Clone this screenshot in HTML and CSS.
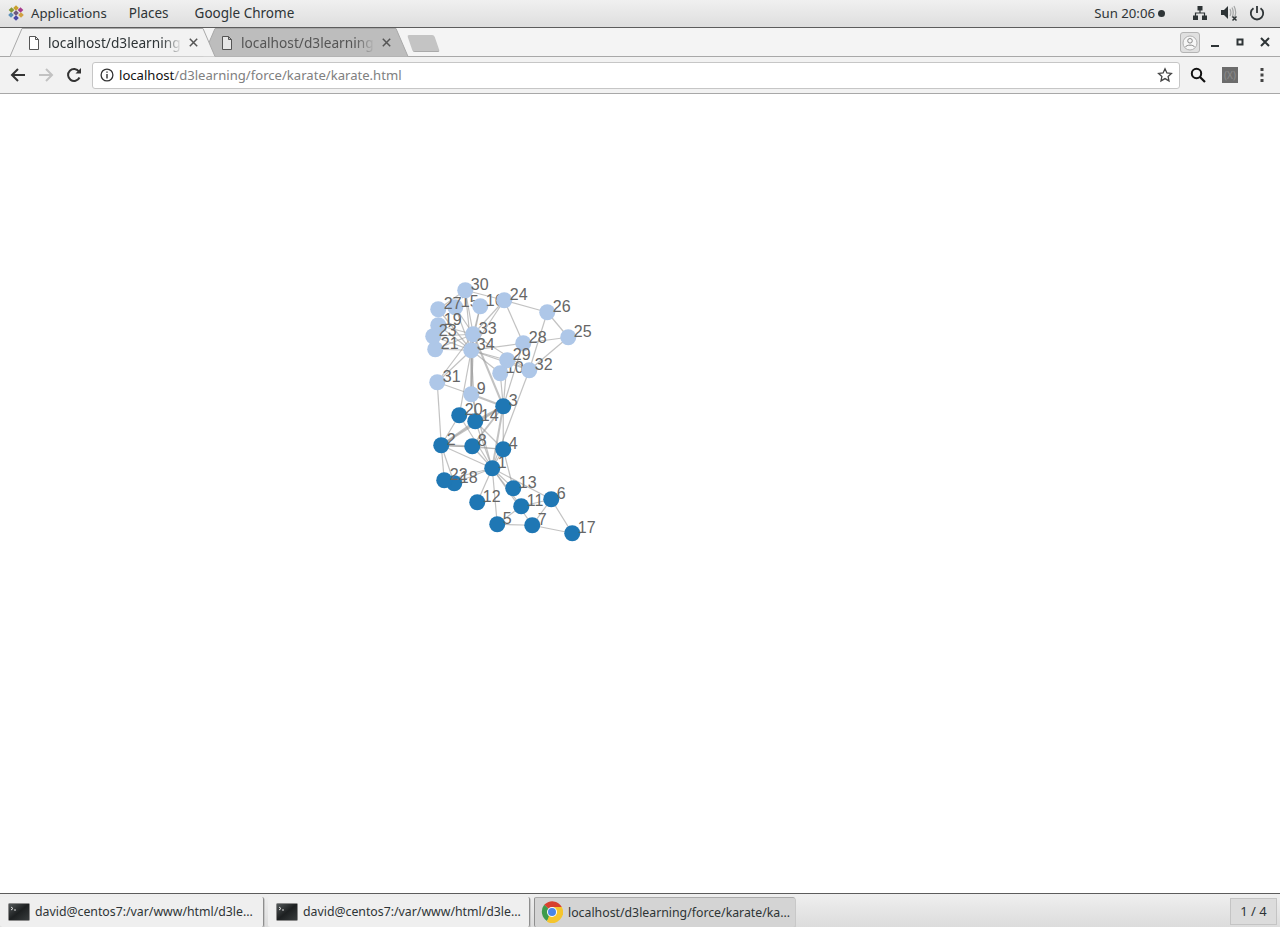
FILE: index.html
```html
<!DOCTYPE html>
<html lang="en">

<head>
    <meta charset="utf-8">
    <link rel="stylesheet" href="styles.css">
    <title>localhost/d3learning/force/karate/karate.html</title>
</head>

<body>
    <header class="top-bar">
        <svg class="apps-icon" width="16" height="16" viewBox="0 0 16 16">
            <rect x="6" y="1" width="4" height="4" fill="#c9a02c" transform="rotate(45 8 3)"/>
            <rect x="10.5" y="3" width="4" height="4" fill="#a63a8c" transform="rotate(45 12.5 5)"/>
            <rect x="1.5" y="3" width="4" height="4" fill="#8a9a34" transform="rotate(45 3.500 5)"/>
            <rect x="1" y="8" width="4" height="4" fill="#5a8fb8" transform="rotate(45 3 10)"/>
            <rect x="11" y="8" width="4" height="4" fill="#d0a040" transform="rotate(45 13 10)"/>
            <rect x="6" y="11" width="4" height="4" fill="#4a4aa8" transform="rotate(45 8 13)"/>
            <rect x="6" y="6" width="4" height="4" fill="#6e5a7e" transform="rotate(45 8 8)"/>
        </svg>
        <span class="menu-item menu-first">Applications</span>
        <span class="menu-item">Places</span>
        <span class="menu-item menu-last">Google Chrome</span>
        <span class="clock">Sun 20:06</span>
        <span class="clock-dot"></span>
        <svg class="tray-icon tray-net" width="16" height="16" viewBox="0 0 16 16">
            <path d="M5.500 1h5v4.500h-5zM1 10.500h5V15H1zM10 10.500h5V15h-5z" fill="#2e3436"/>
            <path d="M8 5v3M3.500 11V8h9v3" fill="none" stroke="#2e3436" stroke-width="1.200"/>
        </svg>
        <svg class="tray-icon tray-sound" width="18" height="18" viewBox="0 0 18 18">
            <path d="M1 6h3l4-4v13l-4-4H1z" fill="#2e3436"/>
            <path d="M10 5c1 2 1 5 0 7M12 3.500c1.500 3 1.500 7 0 10M14 2c2 4 2 9 0 12" fill="none" stroke="#a4a6a6" stroke-width="1.200"/>
            <path d="M12.500 12.500l4 4M16.500 12.500l-4 4" stroke="#2e3436" stroke-width="1.500"/>
        </svg>
        <svg class="tray-icon tray-power" width="16" height="16" viewBox="0 0 16 16">
            <path d="M4.500 3.200a6.200 6.200 0 1 0 7 0" fill="none" stroke="#2e3436" stroke-width="1.800"/>
            <path d="M8 1v7" stroke="#2e3436" stroke-width="1.800"/>
        </svg>
    </header>

    <div class="tab-strip">
        <div class="tab tab-active">
            <svg class="tab-shape" width="206" height="29" viewBox="0 0 206 29">
                <path d="M0 28.500L12 .5H193L205 28.500" fill="#f2f2f2" stroke="#a8a8a8"/>
            </svg>
            <svg class="doc-icon" width="12" height="14" viewBox="0 0 12 14">
                <path d="M1.500.5h6l3 3v10h-9zM7.500.5v3h3" fill="#fff" stroke="#555"/>
            </svg>
            <span class="tab-title">localhost/d3learning</span>
            <svg class="tab-close" width="9" height="9" viewBox="0 0 9 9">
                <path d="M.8.8l7.400 7.400M8.200.8L.8 8.200" stroke="#555" stroke-width="1.500"/>
            </svg>
        </div>
        <div class="tab tab-back">
            <svg class="tab-shape" width="206" height="29" viewBox="0 0 206 29">
                <path d="M0 28.500L12 .5H193L205 28.500" fill="#bdbdbd" stroke="#a8a8a8"/>
            </svg>
            <svg class="doc-icon" width="12" height="14" viewBox="0 0 12 14">
                <path d="M1.500.5h6l3 3v10h-9zM7.500.5v3h3" fill="#e6e6e6" stroke="#555"/>
            </svg>
            <span class="tab-title">localhost/d3learning</span>
            <svg class="tab-close" width="9" height="9" viewBox="0 0 9 9">
                <path d="M.8.8l7.400 7.400M8.200.8L.8 8.200" stroke="#555" stroke-width="1.500"/>
            </svg>
        </div>
        <div class="new-tab"></div>
        <div class="profile-btn">
            <svg width="16" height="16" viewBox="0 0 16 16">
                <circle cx="8" cy="8" r="7" fill="#f6f6f6" stroke="#b0b0b0"/>
                <circle cx="8" cy="5.800" r="2.300" fill="none" stroke="#888"/>
                <path d="M3.500 12c1-2.500 8-2.500 9 0" fill="none" stroke="#888"/>
            </svg>
        </div>
        <div class="win-controls">
            <svg width="10" height="10" viewBox="0 0 10 10"><path d="M1 9h8" stroke="#2e3436" stroke-width="2"/></svg>
            <svg width="10" height="10" viewBox="0 0 10 10"><rect x="2.500" y="2.500" width="5" height="5" fill="none" stroke="#2e3436" stroke-width="2"/></svg>
            <svg width="10" height="10" viewBox="0 0 10 10"><path d="M1 1l8 8M9 1l-8 8" stroke="#2e3436" stroke-width="2"/></svg>
        </div>
    </div>

    <nav class="toolbar">
        <svg class="nav-icon" width="16" height="16" viewBox="0 0 16 16">
            <path d="M15 8H2M8 2L2 8l6 6" fill="none" stroke="#333" stroke-width="2"/>
        </svg>
        <svg class="nav-icon" width="16" height="16" viewBox="0 0 16 16">
            <path d="M1 8h13M8 2l6 6-6 6" fill="none" stroke="#c2c2c2" stroke-width="2"/>
        </svg>
        <svg class="nav-icon" width="16" height="16" viewBox="0 0 16 16">
            <path d="M13.500 10.500A6 6 0 1 1 13 4.500" fill="none" stroke="#333" stroke-width="2"/>
            <path d="M9.500 6.500H15V1z" fill="#333"/>
        </svg>
        <div class="url-box">
            <svg class="info-icon" width="14" height="14" viewBox="0 0 14 14">
                <circle cx="7" cy="7" r="5.900" fill="none" stroke="#333" stroke-width="1.300"/>
                <path d="M7 6v4.500M7 3.500v1.300" stroke="#333" stroke-width="1.400"/>
            </svg>
            <span class="url-text"><span class="url-host">localhost</span>/d3learning/force/karate/karate.html</span>
            <svg class="star-icon" width="16" height="16" viewBox="0 0 16 16">
                <path d="M8 1.800l1.900 4.100 4.500.5-3.300 3 .9 4.500L8 11.600l-4 2.300.9-4.500-3.300-3 4.500-.5z" fill="none" stroke="#444" stroke-width="1.300"/>
            </svg>
        </div>
        <svg class="search-icon" width="16" height="16" viewBox="0 0 16 16">
            <circle cx="6.500" cy="6.500" r="4.700" fill="none" stroke="#111" stroke-width="2"/>
            <path d="M10 10l5 5" stroke="#111" stroke-width="2.200"/>
        </svg>
        <span class="ext-icon">(X)</span>
        <svg class="menu-icon" width="4" height="14" viewBox="0 0 4 14">
            <path d="M.5 0h3v3h-3zM.5 5.500h3v3h-3zM.5 11h3v3h-3z" fill="#444"/>
        </svg>
    </nav>

    <main class="page">
        <svg class="graph" width="1280" height="799" viewBox="-0.25 93.75 1280 799">
            <g class="links">
                <line x1="441" y1="445" x2="492" y2="468"/>
                <line x1="503" y1="449" x2="492" y2="468"/>
                <line x1="503" y1="449" x2="441" y2="445"/>
                <line x1="503" y1="449" x2="503" y2="406"/>
                <line x1="497" y1="524" x2="492" y2="468"/>
                <line x1="551" y1="499" x2="492" y2="468"/>
                <line x1="532" y1="525" x2="492" y2="468"/>
                <line x1="532" y1="525" x2="497" y2="524"/>
                <line x1="532" y1="525" x2="551" y2="499"/>
                <line x1="472" y1="446" x2="492" y2="468"/>
                <line x1="472" y1="446" x2="503" y2="449"/>
                <line x1="471" y1="394" x2="492" y2="468"/>
                <line x1="500" y1="373" x2="503" y2="406"/>
                <line x1="521" y1="506" x2="492" y2="468"/>
                <line x1="521" y1="506" x2="497" y2="524"/>
                <line x1="521" y1="506" x2="551" y2="499"/>
                <line x1="477" y1="502" x2="492" y2="468"/>
                <line x1="513" y1="488" x2="492" y2="468"/>
                <line x1="513" y1="488" x2="503" y2="449"/>
                <line x1="475" y1="421" x2="492" y2="468"/>
                <line x1="475" y1="421" x2="503" y2="449"/>
                <line x1="572" y1="533" x2="551" y2="499"/>
                <line x1="572" y1="533" x2="532" y2="525"/>
                <line x1="454" y1="483" x2="492" y2="468"/>
                <line x1="454" y1="483" x2="441" y2="445"/>
                <line x1="459" y1="415" x2="492" y2="468"/>
                <line x1="459" y1="415" x2="441" y2="445"/>
                <line x1="444" y1="480" x2="492" y2="468"/>
                <line x1="444" y1="480" x2="441" y2="445"/>
                <line x1="547" y1="312" x2="504" y2="300"/>
                <line x1="547" y1="312" x2="568" y2="337"/>
                <line x1="523" y1="343" x2="503" y2="406"/>
                <line x1="523" y1="343" x2="504" y2="300"/>
                <line x1="523" y1="343" x2="568" y2="337"/>
                <line x1="507" y1="360" x2="503" y2="406"/>
                <line x1="465" y1="290" x2="504" y2="300"/>
                <line x1="465" y1="290" x2="438" y2="309"/>
                <line x1="437" y1="382" x2="441" y2="445"/>
                <line x1="437" y1="382" x2="471" y2="394"/>
                <line x1="529" y1="370" x2="492" y2="468"/>
                <line x1="529" y1="370" x2="568" y2="337"/>
                <line x1="529" y1="370" x2="547" y2="312"/>
                <line x1="529" y1="370" x2="507" y2="360"/>
                <line x1="473" y1="334" x2="455" y2="307"/>
                <line x1="473" y1="334" x2="480" y2="306"/>
                <line x1="473" y1="334" x2="438" y2="325"/>
                <line x1="473" y1="334" x2="435" y2="349"/>
                <line x1="473" y1="334" x2="433" y2="336"/>
                <line x1="473" y1="334" x2="504" y2="300"/>
                <line x1="473" y1="334" x2="465" y2="290"/>
                <line x1="473" y1="334" x2="437" y2="382"/>
                <line x1="473" y1="334" x2="529" y2="370"/>
                <line x1="471" y1="350" x2="500" y2="373"/>
                <line x1="471" y1="350" x2="475" y2="421"/>
                <line x1="471" y1="350" x2="455" y2="307"/>
                <line x1="471" y1="350" x2="480" y2="306"/>
                <line x1="471" y1="350" x2="438" y2="325"/>
                <line x1="471" y1="350" x2="459" y2="415"/>
                <line x1="471" y1="350" x2="435" y2="349"/>
                <line x1="471" y1="350" x2="433" y2="336"/>
                <line x1="471" y1="350" x2="504" y2="300"/>
                <line x1="471" y1="350" x2="438" y2="309"/>
                <line x1="471" y1="350" x2="523" y2="343"/>
                <line x1="471" y1="350" x2="507" y2="360"/>
                <line x1="471" y1="350" x2="465" y2="290"/>
                <line x1="471" y1="350" x2="437" y2="382"/>
                <line x1="471" y1="350" x2="529" y2="370"/>
            </g>
            <g class="links links-heavy">
                <line x1="503" y1="406" x2="492" y2="468"/>
                <line x1="503" y1="406" x2="441" y2="445"/>
                <line x1="472" y1="446" x2="441" y2="445"/>
                <line x1="472" y1="446" x2="503" y2="406"/>
                <line x1="471" y1="394" x2="503" y2="406"/>
                <line x1="475" y1="421" x2="441" y2="445"/>
                <line x1="475" y1="421" x2="503" y2="406"/>
                <line x1="473" y1="334" x2="503" y2="406"/>
                <line x1="473" y1="334" x2="471" y2="394"/>
                <line x1="471" y1="350" x2="471" y2="394"/>
                <line x1="471" y1="350" x2="473" y2="334"/>
            </g>
            <g class="nodes group-a">
                <circle cx="492" cy="468" r="8"/><text x="498" y="468">1</text>
                <circle cx="441" cy="445" r="8"/><text x="447" y="445">2</text>
                <circle cx="503" cy="406" r="8"/><text x="509" y="406">3</text>
                <circle cx="503" cy="449" r="8"/><text x="509" y="449">4</text>
                <circle cx="497" cy="524" r="8"/><text x="503" y="524">5</text>
                <circle cx="551" cy="499" r="8"/><text x="557" y="499">6</text>
                <circle cx="532" cy="525" r="8"/><text x="538" y="525">7</text>
                <circle cx="472" cy="446" r="8"/><text x="478" y="446">8</text>
            </g>
            <g class="nodes group-b">
                <circle cx="471" cy="394" r="8"/><text x="477" y="394">9</text>
                <circle cx="500" cy="373" r="8"/><text x="506" y="373">10</text>
            </g>
            <g class="nodes group-a">
                <circle cx="521" cy="506" r="8"/><text x="527" y="506">11</text>
                <circle cx="477" cy="502" r="8"/><text x="483" y="502">12</text>
                <circle cx="513" cy="488" r="8"/><text x="519" y="488">13</text>
                <circle cx="475" cy="421" r="8"/><text x="481" y="421">14</text>
            </g>
            <g class="nodes group-b">
                <circle cx="455" cy="307" r="8"/><text x="461" y="307">15</text>
                <circle cx="480" cy="306" r="8"/><text x="486" y="306">16</text>
            </g>
            <g class="nodes group-a">
                <circle cx="572" cy="533" r="8"/><text x="578" y="533">17</text>
                <circle cx="454" cy="483" r="8"/><text x="460" y="483">18</text>
            </g>
            <g class="nodes group-b">
                <circle cx="438" cy="325" r="8"/><text x="444" y="325">19</text>
            </g>
            <g class="nodes group-a">
                <circle cx="459" cy="415" r="8"/><text x="465" y="415">20</text>
            </g>
            <g class="nodes group-b">
                <circle cx="435" cy="349" r="8"/><text x="441" y="349">21</text>
            </g>
            <g class="nodes group-a">
                <circle cx="444" cy="480" r="8"/><text x="450" y="480">22</text>
            </g>
            <g class="nodes group-b">
                <circle cx="433" cy="336" r="8"/><text x="439" y="336">23</text>
                <circle cx="504" cy="300" r="8"/><text x="510" y="300">24</text>
                <circle cx="568" cy="337" r="8"/><text x="574" y="337">25</text>
                <circle cx="547" cy="312" r="8"/><text x="553" y="312">26</text>
                <circle cx="438" cy="309" r="8"/><text x="444" y="309">27</text>
                <circle cx="523" cy="343" r="8"/><text x="529" y="343">28</text>
                <circle cx="507" cy="360" r="8"/><text x="513" y="360">29</text>
                <circle cx="465" cy="290" r="8"/><text x="471" y="290">30</text>
                <circle cx="437" cy="382" r="8"/><text x="443" y="382">31</text>
                <circle cx="529" cy="370" r="8"/><text x="535" y="370">32</text>
                <circle cx="473" cy="334" r="8"/><text x="479" y="334">33</text>
                <circle cx="471" cy="350" r="8"/><text x="477" y="350">34</text>
            </g>
        </svg>
    </main>

    <footer class="task-bar">
        <div class="task-btn">
            <svg class="term-icon" width="22" height="18" viewBox="0 0 22 18">
                <defs>
                    <linearGradient id="termFill" x1="0" y1="0" x2="1" y2="1">
                        <stop offset="0" stop-color="#555a5b"/>
                        <stop offset="0.5" stop-color="#1d2021"/>
                        <stop offset="1" stop-color="#3a3e3f"/>
                    </linearGradient>
                </defs>
                <rect x=".5" y=".5" width="21" height="17" rx="1" fill="url(#termFill)" stroke="#8a8a8a"/>
                <path d="M3 4l2 1.500L3 7M6 7h2" fill="none" stroke="#ddd"/>
            </svg>
            <span class="task-label">david@centos7:/var/www/html/d3le...</span>
        </div>
        <div class="task-btn">
            <svg class="term-icon" width="22" height="18" viewBox="0 0 22 18">
                <rect x=".5" y=".5" width="21" height="17" rx="1" fill="url(#termFill)" stroke="#8a8a8a"/>
                <path d="M3 4l2 1.500L3 7M6 7h2" fill="none" stroke="#ddd"/>
            </svg>
            <span class="task-label">david@centos7:/var/www/html/d3le...</span>
        </div>
        <div class="task-btn task-btn-active">
            <svg class="chrome-icon" width="22" height="22" viewBox="0 0 22 22">
                <path d="M11 11L3.200 3.800A11 11 0 0 1 20.800 6H11z" fill="#d8412f"/>
                <path d="M11 11l-5 8.900A11 11 0 0 1 3.200 3.800z" fill="#3d9b4b"/>
                <path d="M11 6h9.800A11 11 0 0 1 6 20.800z" fill="#f5c52d"/>
                <circle cx="11" cy="11" r="5" fill="#fff"/>
                <circle cx="11" cy="11" r="4" fill="#4a86e8"/>
            </svg>
            <span class="task-label">localhost/d3learning/force/karate/ka...</span>
        </div>
        <div class="pager">1 / 4</div>
    </footer>
</body>

</html>
```

FILE: styles.css
```css
*,
*:before,
*:after {
    box-sizing: border-box;
}

body {
    margin: 0;
    height: 927px;
    display: flex;
    flex-direction: column;
    overflow: hidden;
    background: #fff;
    color: #2e3436;
    font-family: "Noto Sans", sans-serif;
    font-size: 13.5px;
}

/* gnome top bar */

.top-bar {
    flex: none;
    height: 28px;
    display: flex;
    align-items: center;
    padding: 0 0 1px 8px;
    background: linear-gradient(#f0f0f0, #dedede);
    border-bottom: 1px solid #5c5c5c;
}

.apps-icon {
    flex: none;
}

.menu-item {
    margin-left: 22px;
}

.menu-first {
    margin-left: 7px;
    font-size: 13.2px;
}

.menu-last {
    margin-left: 26px;
}

.clock {
    margin-left: auto;
    font-size: 13.2px;
}

.clock-dot {
    width: 7px;
    height: 7px;
    margin-left: 3px;
    border-radius: 50%;
    background: #2e3436;
}

.tray-icon {
    flex: none;
}

.tray-net {
    margin-left: 27px;
}

.tray-sound {
    margin-left: 12px;
}

.tray-power {
    margin: 0 15px 0 11px;
}

/* chrome tabs */

.tab-strip {
    flex: none;
    height: 29px;
    display: flex;
    align-items: flex-end;
    padding-left: 10px;
    background: #f4f4f4;
    border-bottom: 1px solid #a8a8a8;
}

.tab {
    position: relative;
    flex: none;
    width: 206px;
    height: 29px;
    margin-bottom: -1px;
    display: flex;
    align-items: center;
    padding-left: 18px;
    font-size: 13.7px;
}

.tab-active {
    z-index: 1;
}

.tab-back {
    margin-left: -13px;
    color: #555;
}

.tab-shape {
    position: absolute;
    left: 0;
    top: 0;
}

.doc-icon {
    position: relative;
    flex: none;
}

.tab-title {
    position: relative;
    width: 134px;
    margin-left: 8px;
    overflow: hidden;
    white-space: nowrap;
    -webkit-mask-image: linear-gradient(to right, #000 85%, transparent);
    mask-image: linear-gradient(to right, #000 85%, transparent);
}

.tab-close {
    position: relative;
    flex: none;
    margin-left: 7px;
}

.new-tab {
    flex: none;
    width: 27px;
    height: 17px;
    margin: 0 0 4px 1px;
    border-radius: 2px;
    background: #c4c4c4;
    border-bottom: 1px solid #aaa;
    transform: skewX(19deg);
}

.profile-btn {
    flex: none;
    width: 20px;
    height: 21px;
    margin: 0 0 3px auto;
    display: flex;
    align-items: center;
    justify-content: center;
    border: 1px solid #b4b4b4;
    border-radius: 3px;
    background: #e0e0e0;
}

.win-controls {
    flex: none;
    width: 80px;
    height: 28px;
    display: flex;
    align-items: center;
    gap: 15px;
    padding-left: 10px;
}

/* chrome toolbar */

.toolbar {
    flex: none;
    height: 37px;
    display: flex;
    align-items: center;
    padding: 0 16px 0 10px;
    background: #f2f2f2;
    border-bottom: 1px solid #a8a8a8;
}

.nav-icon {
    flex: none;
    margin-right: 12px;
}

.url-box {
    flex: 1;
    height: 27px;
    margin-left: -2px;
    display: flex;
    align-items: center;
    padding: 0 6px 0 7px;
    background: #fff;
    border: 1px solid #c6c6c6;
    border-radius: 3px;
}

.info-icon {
    flex: none;
}

.url-text {
    margin-left: 5px;
    color: #808080;
    font-size: 13.1px;
}

.url-host {
    color: #111;
}

.star-icon {
    margin-left: auto;
}

.search-icon {
    flex: none;
    margin-left: 10px;
}

.ext-icon {
    flex: none;
    width: 16px;
    height: 16px;
    margin-left: 16px;
    background: #6c6c6c;
    color: #8d8d8d;
    font-size: 10px;
    line-height: 16px;
    text-align: center;
}

.menu-icon {
    flex: none;
    margin-left: 22px;
}

/* the graph */

.page {
    flex: 1;
    min-height: 0;
}

.graph {
    display: block;
}

.links line {
    stroke: #999;
    stroke-opacity: 0.6;
    stroke-width: 1.2;
}

.links-heavy line {
    stroke-width: 2;
}

.nodes text {
    fill: #666;
    font-family: "Liberation Sans", sans-serif;
    font-size: 16px;
    transform: translate(-0.5px, -0.5px);
}

.group-a circle {
    fill: #1f77b4;
}

.group-b circle {
    fill: #aec7e8;
}

/* gnome window list */

.task-bar {
    flex: none;
    height: 34px;
    display: flex;
    align-items: center;
    gap: 4px;
    padding: 2px 3px 0 0;
    background: linear-gradient(#efefef, #dcdcdc);
    border-top: 1px solid #5c5c5c;
}

.task-btn {
    flex: none;
    width: 262px;
    height: 30px;
    display: flex;
    align-items: center;
    padding-left: 8px;
    background: #efefef;
    border-right: 1px solid #8e8e8e;
    border-radius: 2px;
    box-shadow: 1px 1px 0 #c8c8c8;
}

.task-btn:first-child {
    width: 264px;
}

.task-btn-active {
    width: 261px;
    padding-left: 6px;
    background: #d4d4d4;
    border-left: 1px solid #8e8e8e;
    border-right: 0;
    border-top: 1px solid #aaa;
}

.term-icon,
.chrome-icon {
    flex: none;
}

.task-label {
    margin-left: 5px;
    font-size: 12.3px;
    white-space: nowrap;
}

.pager {
    flex: none;
    width: 47px;
    height: 27px;
    margin-left: auto;
    border: 1px solid #c4c4c4;
    background: #dcdcdc;
    font-size: 13px;
    line-height: 25px;
    text-align: center;
}
```
